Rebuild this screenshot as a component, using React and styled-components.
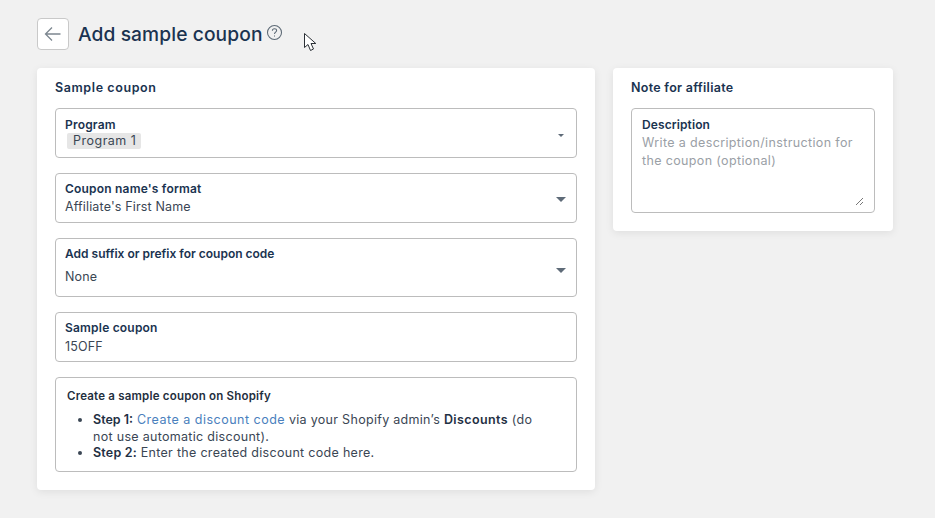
import React from "react";
import styled, { createGlobalStyle } from "styled-components";

const GlobalStyle = createGlobalStyle`
  html, body {
    margin: 0;
    padding: 0;
    background-color: #f1f1f1;
    font-family: "Inter", "Liberation Sans", sans-serif;
    color: #1f3044;
  }
`;

const Page = styled.div`
  width: 935px;
  height: 518px;
  box-sizing: border-box;
  padding: 17px 42px 0 37px;
  overflow: hidden;
  position: relative;
`;

const Header = styled.div`
  display: flex;
  align-items: center;
  height: 33px;
  margin-bottom: 18px;
`;

const BackButton = styled.div`
  width: 32px;
  height: 32px;
  box-sizing: border-box;
  border: 1px solid #c9c9c9;
  border-radius: 4px;
  background-color: #fff;
  display: flex;
  align-items: center;
  justify-content: center;
  margin-right: 9px;
`;

const PageTitle = styled.h1`
  margin: 0 3px 0 0;
  font-size: 19.2px;
  font-weight: 500;
  color: #1a3350;
  letter-spacing: 0.1px;
`;

const HelpIcon = styled.svg`
  width: 17px;
  height: 17px;
  margin-bottom: 3px;
`;

const Columns = styled.div`
  display: flex;
  align-items: flex-start;
  gap: 18px;
`;

const Card = styled.section`
  width: ${(p) => p.$width}px;
  box-sizing: border-box;
  background-color: #fff;
  border-radius: 4px;
  box-shadow: 0 2px 8px rgba(0, 0, 0, 0.08);
  padding: 12px 18px 18px;
  display: flex;
  flex-direction: column;
  gap: 15px;
`;

const CardTitle = styled.h2`
  margin: 0 0 -2px;
  height: 15px;
  line-height: 15px;
  font-size: 12.5px;
  font-weight: 600;
  letter-spacing: ${(p) => p.$spacing}px;
  color: #1a3350;
`;

const Field = styled.div`
  height: ${(p) => p.$height}px;
  box-sizing: border-box;
  border: 1px solid #bcbcbc;
  border-radius: 4px;
  padding: ${(p) => p.$top || 8}px 9px 0 ${(p) => p.$left || 9}px;
  position: relative;
`;

const Label = styled.div`
  font-size: 12px;
  line-height: 15px;
  font-weight: 600;
  letter-spacing: ${(p) => p.$spacing ?? 0.2}px;
  color: #1a3350;
`;

const Value = styled.div`
  margin-top: ${(p) => p.$gap || 2}px;
  font-size: 12.5px;
  line-height: 16px;
  letter-spacing: 0.15px;
  color: #3a4654;
`;

const Chip = styled.span`
  display: inline-block;
  background-color: #e6e6e6;
  border-radius: 2px;
  padding: 0 5px 0 6px;
  margin-left: 2px;
  line-height: 16px;
  letter-spacing: 0.5px;
`;

const Caret = styled.span`
  position: absolute;
  right: ${(p) => (p.$small ? 12 : 10)}px;
  top: ${(p) => p.$top}px;
  width: 0;
  height: 0;
  border-left: ${(p) => (p.$small ? 3 : 5)}px solid transparent;
  border-right: ${(p) => (p.$small ? 3 : 5)}px solid transparent;
  border-top: ${(p) => (p.$small ? 3 : 5)}px solid #5e6b78;
`;

const InfoBox = styled.div`
  height: 95px;
  box-sizing: border-box;
  border: 1px solid #bcbcbc;
  border-radius: 4px;
  padding: 11px 11px 0;
`;

const InfoTitle = styled.div`
  font-size: 11.5px;
  line-height: 15px;
  font-weight: 600;
  letter-spacing: 0.2px;
  color: #1f2f40;
`;

const Steps = styled.ul`
  margin: 8px 0 0;
  padding: 0 30px 0 26px;
  font-size: 12.5px;
  line-height: 16.5px;
  letter-spacing: 0.3px;
  color: #3a4654;
`;

const Link = styled.a`
  color: #4a80bd;
  text-decoration: none;
  letter-spacing: 0.5px;
`;

const Strong = styled.strong`
  font-weight: 600;
  letter-spacing: ${(p) => p.$spacing ?? 0}px;
  color: #1f3044;
`;

const Placeholder = styled.div`
  margin-top: 2px;
  font-size: 12.5px;
  line-height: 18px;
  letter-spacing: 0.36px;
  color: #9aa0a6;
`;

const ResizeGrip = styled.svg`
  position: absolute;
  right: 10px;
  bottom: 6px;
  width: 9px;
  height: 9px;
`;

const Cursor = styled.svg`
  position: absolute;
  left: 303px;
  top: 32px;
  width: 15px;
  height: 20px;
`;

export default function App() {
  return (
    <Page>
      <GlobalStyle />
      <Header>
        <BackButton>
          <svg width="18" height="16" viewBox="0 0 18 16" fill="none" stroke="#7d8790" strokeWidth="1.3">
            <path d="M16.5 8H1.5M8 1.5L1.5 8L8 14.5" />
          </svg>
        </BackButton>
        <PageTitle>Add sample coupon</PageTitle>
        <HelpIcon viewBox="0 0 16 16" fill="none" stroke="#5c6975" strokeWidth="1">
          <circle cx="8" cy="8" r="6.6" />
          <path d="M6 6.3C6 5 7 4.4 8 4.4C9.1 4.4 10 5.1 10 6.2C10 7.6 8 7.6 8 9.3" />
          <path d="M8 10.8V11.8" />
        </HelpIcon>
      </Header>
      <Columns>
        <Card $width={558}>
          <CardTitle $spacing={0.6}>Sample coupon</CardTitle>
          <Field $height={50} $top={8}>
            <Label>Program</Label>
            <Value $gap={1}>
              <Chip>Program 1</Chip>
            </Value>
            <Caret $small $top={25} />
          </Field>
          <Field $height={50} $top={7}>
            <Label>Coupon name's format</Label>
            <Value $gap={3}>Affiliate's First Name</Value>
            <Caret $top={23} />
          </Field>
          <Field $height={59} $top={7}>
            <Label $spacing={0}>Add suffix or prefix for coupon code</Label>
            <Value $gap={8}>None</Value>
            <Caret $top={29} />
          </Field>
          <Field $height={50} $top={7}>
            <Label>Sample coupon</Label>
            <Value $gap={4}>15OFF</Value>
          </Field>
          <InfoBox>
            <InfoTitle>Create a sample coupon on Shopify</InfoTitle>
            <Steps>
              <li>
                <Strong>Step 1:</Strong> <Link>Create a discount code</Link> via your Shopify admin’s{" "}
                <Strong $spacing={0.4}>Discounts</Strong> (do not use automatic discount).
              </li>
              <li>
                <Strong $spacing={0.2}>Step 2:</Strong> Enter the created discount code here.
              </li>
            </Steps>
          </InfoBox>
        </Card>
        <Card $width={280}>
          <CardTitle $spacing={0.28}>Note for affiliate</CardTitle>
          <Field $height={105} $top={8} $left={10}>
            <Label $spacing={0.1}>Description</Label>
            <Placeholder>Write a description/instruction for the coupon (optional)</Placeholder>
            <ResizeGrip viewBox="0 0 9 9" fill="none" stroke="#555" strokeWidth="0.8">
              <path d="M1 8L8 1M5 8L8 5" />
            </ResizeGrip>
          </Field>
        </Card>
      </Columns>
      <Cursor viewBox="0 0 15 20">
        <path
          d="M1.5 1.5V15.5L5 12.5L7.5 18.5L10.5 17L8 11.5H12.8Z"
          fill="#fff"
          stroke="#2a2f35"
          strokeWidth="1"
          strokeLinejoin="round"
        />
      </Cursor>
    </Page>
  );
}
